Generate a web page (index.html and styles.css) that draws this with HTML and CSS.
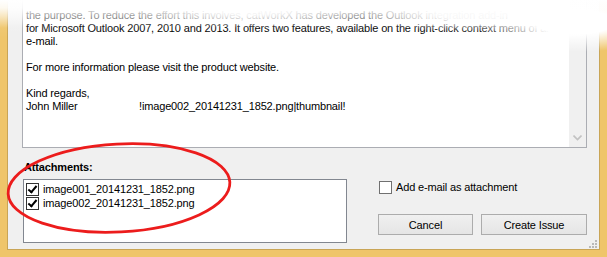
FILE: index.html
```html
<!DOCTYPE html>
<html lang="en">

<head>
    <meta charset="UTF-8">
    <title>Create Issue</title>
    <link rel="stylesheet" href="styles.css">
</head>

<body>
    <div class="window">
        <div class="client">
            <div class="message">
                <div class="message-text">
                    <p>the purpose. To reduce the effort this involves, catWorkX has developed the Outlook integration add-in</p>
                    <p>for Microsoft Outlook 2007, 2010 and 2013. It offers two features, available on the right-click context menu of an</p>
                    <p>e-mail.</p>
                    <p>&nbsp;</p>
                    <p>For more information please visit the product website.</p>
                    <p>&nbsp;</p>
                    <p>Kind regards,</p>
                    <p><span class="sig">John Miller</span>!image002_20141231_1852.png|thumbnail!</p>
                </div>
                <div class="scrollbar">
                    <svg class="arrow" width="9" height="6" viewBox="0 0 9 6">
                        <path d="M0.5 0.5 L4.5 4.5 L8.5 0.5" fill="none" stroke="#c2c2c2" stroke-width="1.6" />
                    </svg>
                </div>
            </div>

            <div class="bottom">
                <div class="attachments">
                    <div class="label">Attachments:</div>
                    <div class="listbox">
                        <label class="item"><span class="check checked"></span>image001_20141231_1852.png</label>
                        <label class="item"><span class="check checked"></span>image002_20141231_1852.png</label>
                    </div>
                </div>
                <div class="options">
                    <label class="item add"><span class="check"></span>Add e-mail as attachment</label>
                    <div class="buttons">
                        <button class="btn cancel">Cancel</button>
                        <button class="btn create">Create Issue</button>
                    </div>
                </div>
            </div>
            <svg class="grip" width="8" height="8" viewBox="0 0 8 8">
                <rect x="6" y="0" width="2" height="2" />
                <rect x="3" y="3" width="2" height="2" />
                <rect x="6" y="3" width="2" height="2" />
                <rect x="0" y="6" width="2" height="2" />
                <rect x="3" y="6" width="2" height="2" />
                <rect x="6" y="6" width="2" height="2" />
            </svg>
        </div>
    </div>

    <!-- top fade of the cropped screenshot -->
    <div class="fade"></div>

    <!-- red marker round the attachments -->
    <svg class="marker" width="607" height="257" viewBox="0 0 607 257">
        <ellipse cx="119" cy="188" rx="111" ry="44" transform="rotate(-3 119 188)" fill="none" stroke="#ec1c1c"
            stroke-width="2.8" />
    </svg>
</body>

</html>
```

FILE: styles.css
```css
body {
    margin: 0;
    padding: 0;
    font-family: 'Liberation Sans', Arial, sans-serif;
    font-size: 11px;
    letter-spacing: -0.15px;
    color: #000;
    background-color: #efc56a;
    overflow: hidden;
}

.window {
    width: 607px;
    height: 257px;
    box-sizing: border-box;
    padding: 0 8px 8px 8px;
}

.client {
    position: relative;
    height: 249px;
    background-color: #f0f0f0;
    box-shadow: -1px 1px 0 #c9a556, 1px 1px 0 #c9a556;
    padding: 0 12px 0 14px;
    box-sizing: border-box;
}

.message {
    display: flex;
    height: 148px;
    background-color: white;
    border: 1px solid #abadb3;
    border-top: none;
    box-sizing: border-box;
}

.message-text {
    flex: 1;
    padding: 9px 0 0 3px;
    line-height: 13px;
    white-space: nowrap;
    overflow: hidden;
}

.message-text p {
    margin: 0;
}

.sig {
    display: inline-block;
    width: 113px;
}

.scrollbar {
    width: 17px;
    background-color: #f0f0f0;
    display: flex;
    align-items: flex-end;
    justify-content: center;
    padding-bottom: 6px;
    box-sizing: border-box;
}

.bottom {
    display: flex;
    margin-top: 13px;
}

.attachments {
    width: 324px;
    margin-left: 1px;
}

.label {
    font-weight: bold;
    line-height: 13px;
    margin-left: 1px;
}

.listbox {
    margin-top: 5px;
    height: 64px;
    background-color: white;
    border: 1px solid #828790;
    box-sizing: border-box;
    padding: 2px 0 0 2px;
}

.item {
    display: flex;
    align-items: center;
    gap: 4px;
    height: 14px;
    white-space: nowrap;
}

.check {
    width: 13px;
    height: 13px;
    box-sizing: border-box;
    border: 1px solid #333;
    background-color: white;
    position: relative;
}

.check.checked::after {
    content: "";
    position: absolute;
    left: 3px;
    top: 0px;
    width: 3px;
    height: 7px;
    border: solid #000;
    border-width: 0 2px 2px 0;
    transform: rotate(40deg);
}

.options {
    margin-left: auto;
    width: 209px;
    padding-top: 19px;
}

.add .check {
    border-color: #707070;
}

.add {
    gap: 4px;
    margin-left: 1px;
}

.buttons {
    display: flex;
    gap: 8px;
    margin-top: 20px;
}

.btn {
    height: 21px;
    font-family: 'Liberation Sans', Arial, sans-serif;
    font-size: 11px;
    letter-spacing: -0.15px;
    color: #000;
    background: linear-gradient(#f0f0f0, #e5e5e5);
    border: 1px solid #acacac;
    padding: 0;
}

.cancel {
    width: 95px;
}

.create {
    width: 106px;
}

.grip {
    position: absolute;
    right: 2px;
    bottom: 1px;
    fill: #b9b9b9;
}

.fade {
    position: absolute;
    left: 0;
    top: 0;
    width: 607px;
    height: 60px;
    pointer-events: none;
    background:
        radial-gradient(ellipse 100px 30px at 575px 22px, #fff 40%, rgba(255, 255, 255, 0) 100%),
        radial-gradient(ellipse 120px 16px at 250px 12px, rgba(255, 255, 255, 0.85) 20%, rgba(255, 255, 255, 0) 100%),
        radial-gradient(ellipse 110px 18px at 470px 14px, rgba(255, 255, 255, 0.92) 30%, rgba(255, 255, 255, 0) 100%),
        linear-gradient(to bottom, #fff 0, rgba(255, 255, 255, 0.9) 8px, rgba(255, 255, 255, 0.55) 17px, rgba(255, 255, 255, 0.05) 28px, rgba(255, 255, 255, 0) 38px);
}

.marker {
    position: absolute;
    left: 0;
    top: 0;
    pointer-events: none;
}
```
